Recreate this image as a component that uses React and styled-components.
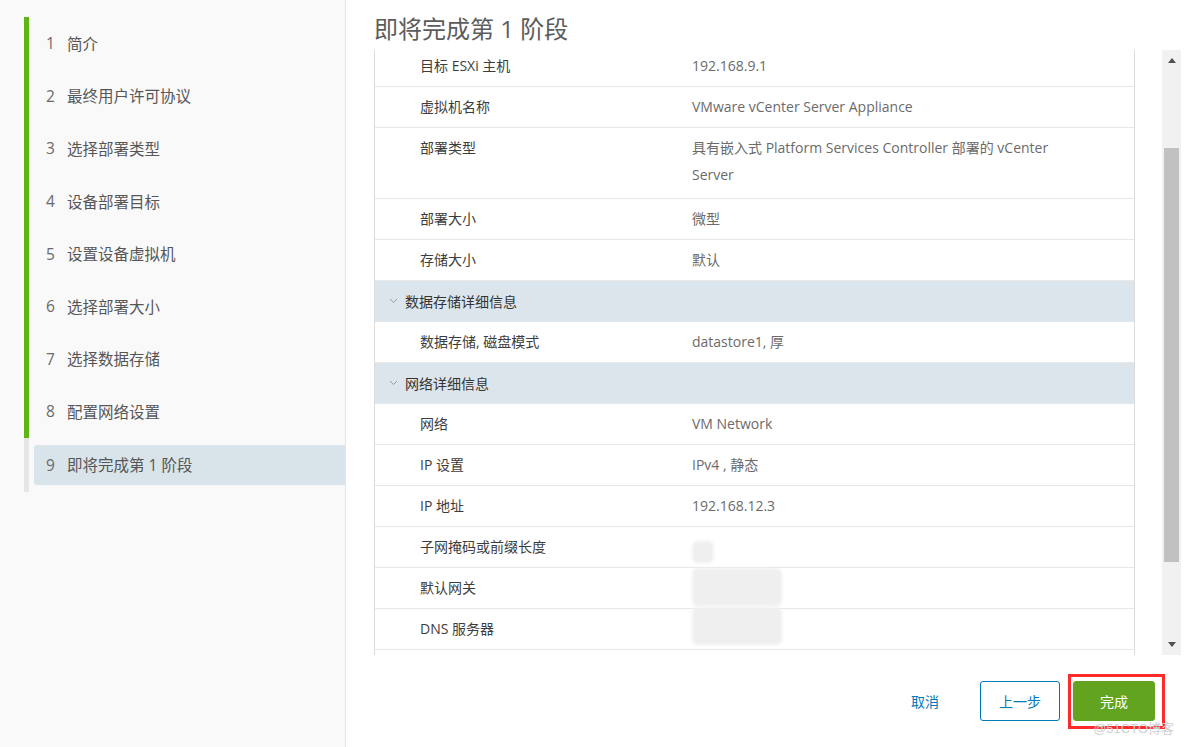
import styled, { createGlobalStyle } from "styled-components";

const GlobalStyle = createGlobalStyle`
  html, body {
    margin: 0;
    padding: 0;
    background: #ffffff;
  }
  body {
    font-family: "Open Sans", "Noto Sans CJK SC", sans-serif;
  }
  #root {
    width: 1184px;
    height: 747px;
    overflow: hidden;
  }
`;

const Page = styled.div`
  position: relative;
  display: flex;
  width: 1184px;
  height: 747px;
`;

const Sidebar = styled.nav`
  width: 346px;
  flex-shrink: 0;
  background: #f9f9f9;
  border-right: 1px solid #e6e6e6;
  padding: 17px 0 0 24px;
  box-sizing: border-box;
`;

const Step = styled.div`
  height: ${(p) => (p.$last ? "54px" : "52.6px")};
  border-left: 5px solid ${(p) => (p.$done ? "#60b515" : "#e6e6e6")};
  padding-left: 5px;
  display: flex;
  align-items: center;
`;

const StepInner = styled.div`
  flex: 1;
  height: 40px;
  display: flex;
  align-items: center;
  padding-left: 12px;
  border-radius: 3px 0 0 3px;
  background: ${(p) => (p.$active ? "#d9e4ea" : "transparent")};
  color: #565656;
  font-size: 15.5px;
`;

const StepNum = styled.span`
  width: 21px;
  flex-shrink: 0;
  color: #6a6a6a;
`;

const Main = styled.main`
  flex: 1;
  display: flex;
  flex-direction: column;
  padding: 0 3px 0 28px;
  min-width: 0;
`;

const Title = styled.h1`
  margin: 0;
  height: 50px;
  padding-top: 14px;
  box-sizing: border-box;
  font-size: 24px;
  line-height: 30px;
  font-weight: 400;
  color: #5c5c5c;
`;

const Body = styled.div`
  height: 605px;
  display: flex;
  gap: 27px;
`;

const Viewport = styled.div`
  flex: 1;
  overflow: hidden;
  border-left: 1px solid #dcdcdc;
  border-right: 1px solid #dcdcdc;
`;

const Table = styled.div`
  margin-top: -4px;
`;

const Row = styled.div`
  display: flex;
  align-items: flex-start;
  height: ${(p) => (p.$tall ? "71px" : "41px")};
  box-sizing: border-box;
  border-bottom: 1px solid #e8e8e8;
  font-size: 14px;
  line-height: 27px;
  padding-top: 6px;
`;

const Label = styled.div`
  width: 317px;
  flex-shrink: 0;
  padding-left: 45px;
  box-sizing: border-box;
  color: #3d3d3d;
`;

const Value = styled.div`
  flex: 1;
  color: #6b6b6b;
  padding-right: 60px;
`;

const GroupRow = styled.div`
  display: flex;
  align-items: center;
  height: 41px;
  box-sizing: border-box;
  background: #dce5eb;
  border-bottom: 1px solid #e2e8ec;
  padding-left: 14px;
  gap: 7px;
  font-size: 14px;
  color: #333333;
`;

const Redacted = styled.div`
  width: ${(p) => p.$w}px;
  height: ${(p) => p.$h}px;
  margin-top: ${(p) => p.$top || 0}px;
  background: #efefef;
  border-radius: 6px;
  filter: blur(1.5px);
`;

const Scrollbar = styled.div`
  width: 19px;
  flex-shrink: 0;
  background: #f1f1f1;
  display: flex;
  flex-direction: column;
  align-items: center;
`;

const ScrollArrow = styled.div`
  height: ${(p) => p.$h}px;
  display: flex;
  align-items: center;
  justify-content: center;
`;

const Thumb = styled.div`
  width: 15px;
  height: 414px;
  margin-top: 78px;
  background: #c1c1c1;
`;

const ScrollGap = styled.div`
  flex: 1;
`;

const Footer = styled.footer`
  flex: 1;
  display: flex;
  align-items: center;
  justify-content: flex-end;
  padding-right: 16px;
`;

const LinkButton = styled.button`
  border: none;
  background: none;
  color: #0079b8;
  font-family: inherit;
  font-size: 14px;
  padding: 0 12px;
  margin-right: 29px;
  height: 40px;
`;

const Button = styled.button`
  height: 40px;
  min-width: ${(p) => (p.$primary ? "82px" : "80px")};
  box-sizing: border-box;
  border-radius: 3px;
  border: 1px solid ${(p) => (p.$primary ? "#62a420" : "#0079b8")};
  background: ${(p) => (p.$primary ? "#62a420" : "#ffffff")};
  color: ${(p) => (p.$primary ? "#ffffff" : "#0079b8")};
  font-family: inherit;
  font-size: 14px;
`;

const Highlight = styled.div`
  display: flex;
  margin-left: 8px;
  padding: 4px 7px 5px 2px;
  border: 3px solid #ff2a2a;
`;

const Watermark = styled.div`
  position: absolute;
  right: 10px;
  bottom: 10px;
  font-size: 13px;
  color: #d0d0d0;
  font-family: "Liberation Sans", "Noto Sans CJK SC", sans-serif;
`;

const Chevron = () => (
  <svg width="9" height="6" viewBox="0 0 9 6">
    <path d="M1 1 L4.5 4.5 L8 1" fill="none" stroke="#9a9a9a" strokeWidth="1" />
  </svg>
);

const Triangle = ({ up }) => (
  <svg width="8" height="5" viewBox="0 0 8 5">
    <path d={up ? "M0 5 L4 0 L8 5 Z" : "M0 0 L4 5 L8 0 Z"} fill="#505050" />
  </svg>
);

const steps = [
  "简介",
  "最终用户许可协议",
  "选择部署类型",
  "设备部署目标",
  "设置设备虚拟机",
  "选择部署大小",
  "选择数据存储",
  "配置网络设置",
  "即将完成第 1 阶段",
];

const sections = [
  {
    rows: [
      ["目标 ESXi 主机", "192.168.9.1"],
      ["虚拟机名称", "VMware vCenter Server Appliance"],
      ["部署类型", "具有嵌入式 Platform Services Controller 部署的 vCenter Server", true],
      ["部署大小", "微型"],
      ["存储大小", "默认"],
    ],
  },
  {
    title: "数据存储详细信息",
    rows: [["数据存储, 磁盘模式", "datastore1, 厚"]],
  },
  {
    title: "网络详细信息",
    rows: [
      ["网络", "VM Network"],
      ["IP 设置", "IPv4 , 静态"],
      ["IP 地址", "192.168.12.3"],
      ["子网掩码或前缀长度", { w: 22, h: 22, top: 8 }],
      ["默认网关", { w: 90, h: 38, top: -6 }],
      ["DNS 服务器", { w: 90, h: 38, top: -8 }],
    ],
  },
];

export default function App() {
  return (
    <Page>
      <GlobalStyle />
      <Sidebar>
        {steps.map((s, i) => (
          <Step key={s} $done={i < 8} $last={i === 8}>
            <StepInner $active={i === 8}>
              <StepNum>{i + 1}</StepNum>
              {s}
            </StepInner>
          </Step>
        ))}
      </Sidebar>
      <Main>
        <Title>即将完成第 1 阶段</Title>
        <Body>
          <Viewport>
            <Table>
              {sections.map((sec, si) => (
                <div key={si}>
                  {sec.title && (
                    <GroupRow>
                      <Chevron />
                      {sec.title}
                    </GroupRow>
                  )}
                  {sec.rows.map(([label, value, tall]) => (
                    <Row key={label} $tall={tall}>
                      <Label>{label}</Label>
                      <Value>
                        {typeof value === "string" ? (
                          value
                        ) : (
                          <Redacted $w={value.w} $h={value.h} $top={value.top} />
                        )}
                      </Value>
                    </Row>
                  ))}
                </div>
              ))}
            </Table>
          </Viewport>
          <Scrollbar>
            <ScrollArrow $h={20}>
              <Triangle up />
            </ScrollArrow>
            <Thumb />
            <ScrollGap />
            <ScrollArrow $h={22}>
              <Triangle />
            </ScrollArrow>
          </Scrollbar>
        </Body>
        <Footer>
          <LinkButton>取消</LinkButton>
          <Button>上一步</Button>
          <Highlight>
            <Button $primary>完成</Button>
          </Highlight>
        </Footer>
      </Main>
      <Watermark>@51CTO博客</Watermark>
    </Page>
  );
}
